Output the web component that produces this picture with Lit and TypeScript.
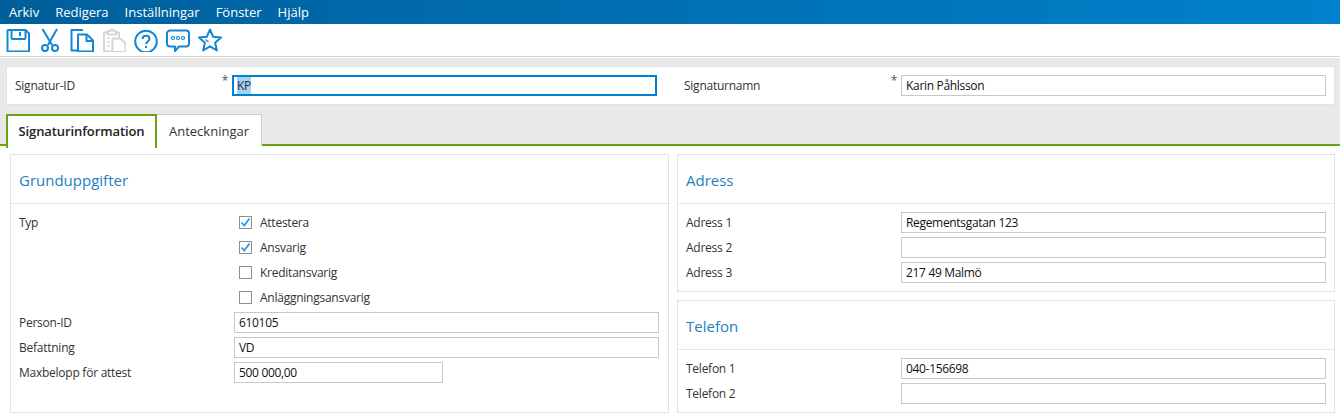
import { LitElement, html, css, svg } from "lit";
import { customElement } from "lit/decorators.js";

const ICONS = {
  save: svg`<path d="M1.500 3a1 1 0 0 1 1-1H19.500L23 5.500V22.500a1 1 0 0 1-1 1H2.500a1 1 0 0 1-1-1z"/><path d="M5.500 2v8a1 1 0 0 0 1 1h12a1 1 0 0 0 1-1V2"/><path d="M14 4v4" stroke-width="2"/>`,
  cut: svg`<path d="M4.500 1l9.500 16"/><path d="M19 1L10 17"/><circle cx="7" cy="20" r="3"/><circle cx="17" cy="20" r="3"/>`,
  copy: svg`<path d="M13 2H1.500v20.500H7"/><path d="M8 6.500h9l6 6v11H8z"/><path d="M16.500 6.500v6.500h6.500"/>`,
  paste: svg`<path d="M6.500 4.500H2v19h8"/><path d="M13 4.500h4v5"/><path d="M6 3h2.500a1.500 1.500 0 0 1 3 0H14v3.500H6z"/><path d="M10.500 10.500h8l5 5v8.500H10.500z"/><path d="M5 10h3M5 14h3M5 18h3" stroke-width="1.500"/>`,
  help: svg`<circle cx="12" cy="13.500" r="10.800"/><path d="M8.600 11c0-2 1.500-3.200 3.500-3.200s3.400 1.200 3.400 3c0 2.600-3.400 2.900-3.400 5.400"/><path d="M12.100 17.800v2.200"/>`,
  chat: svg`<path d="M4 2.500h16a3 3 0 0 1 3 3v10a3 3 0 0 1-3 3h-7L9 23v-4.500H4a3 3 0 0 1-3-3v-10a3 3 0 0 1 3-3z"/><circle cx="7" cy="10" r="1.500" stroke-width="1.200"/><circle cx="12" cy="10" r="1.500" stroke-width="1.200"/><circle cx="17" cy="10" r="1.500" stroke-width="1.200"/>`,
  star: svg`<path d="M12 1.500l3.200 7.300 7.800.700-5.900 5.200 1.800 7.800L12 18.400l-6.900 4.100 1.800-7.800L1 9.500l7.800-.700z"/><path d="M7.500 11.500l3 2.500" stroke-width="1.200"/>`,
};

@customElement("app-root")
export class AppRoot extends LitElement {
  static styles = css`
    :host {
      display: block;
      width: 1340px;
      height: 416px;
      overflow: hidden;
      background: #fff;
      font-family: "Open Sans", "Noto Sans", sans-serif;
      font-size: 12px;
      letter-spacing: -0.25px;
      color: #333;
    }
    .menubar {
      height: 24px;
      display: flex;
      align-items: center;
      gap: 16px;
      padding-left: 9px;
      background: linear-gradient(90deg, #005f9b, #0081cb);
      color: #fff;
      font-size: 13px;
      letter-spacing: 0;
    }
    .toolbar {
      height: 32px;
      display: flex;
      align-items: center;
      gap: 8px;
      padding-left: 6px;
      box-sizing: border-box;
      background: #fff;
    }
    .icon {
      width: 24px;
      height: 24px;
      fill: none;
      stroke: #1287d3;
      stroke-width: 2;
      stroke-linejoin: round;
      display: block;
    }
    .icon.off {
      stroke: #d6d6d6;
    }
    .rule {
      height: 1px;
      background: #d4d4d4;
      border-bottom: 1px solid #fff;
    }
    .top {
      background: #e9e9e9;
      padding: 8px 5px 0 6px;
      height: 88px;
      box-sizing: border-box;
    }
    .head {
      height: 39px;
      box-sizing: border-box;
      background: #fff;
      border: 1px solid #dfe3e8;
      display: grid;
      grid-template-columns: 225px 425px 27px 217px 425px;
      align-items: center;
    }
    .head .label {
      padding-left: 8px;
    }
    .req {
      position: relative;
      display: block;
    }
    .star {
      position: absolute;
      top: -2px;
      right: 4px;
      color: #555;
      font-size: 12px;
      line-height: 12px;
    }
    input {
      box-sizing: border-box;
      display: block;
      width: 425px;
      height: 21px;
      border: 1px solid #c8c8c8;
      padding: 0 4px;
      font: inherit;
      letter-spacing: -0.32px;
      color: #111;
      background: #fff;
      outline: none;
    }
    input.focus {
      border: 2px solid #0082d2;
      padding: 0 3px;
      color: #17324f;
    }
    input.focus::selection {
      background: #a8d1f0;
    }
    input.short {
      width: 209px;
    }
    .tabs {
      display: flex;
      align-items: flex-end;
      margin-top: 9px;
      height: 32px;
    }
    .tab {
      box-sizing: border-box;
      display: flex;
      align-items: center;
      justify-content: center;
      height: 32px;
      width: 105px;
      background: #fff;
      border: 1px solid #cfcfcf;
      border-bottom: none;
      border-left: none;
      color: #333;
      font-size: 13px;
      letter-spacing: 0;
    }
    .tab.active {
      width: 151px;
      height: 34px;
      border: 2px solid #6ca312;
      border-bottom: none;
      padding-bottom: 2px;
      margin-bottom: -2px;
      position: relative;
      z-index: 1;
      font-weight: 600;
      letter-spacing: -0.1px;
      color: #222;
    }
    .content {
      border-top: 2px solid #6ca312;
      background: #fff;
      margin-top: -2px;
      padding: 8px 5px 0 10px;
      display: grid;
      grid-template-columns: 659px 658px;
      gap: 8px;
      height: 272px;
      box-sizing: border-box;
    }
    .col {
      display: flex;
      flex-direction: column;
      gap: 8px;
    }
    .panel {
      border: 1px solid #dfe3e8;
      box-sizing: border-box;
      background: #fff;
    }
    .left {
      height: 259px;
    }
    h2 {
      margin: 0;
      box-sizing: border-box;
      padding: 15px 8px 0;
      line-height: 20px;
      font-size: 15px;
      font-weight: 400;
      letter-spacing: 0;
      color: #1f7fc0;
      border-bottom: 1px solid #e4e7ea;
      height: 49px;
    }
    .body {
      padding: 8px 9px 8px 8px;
      display: grid;
      grid-template-columns: 215px 1fr;
      row-gap: 4px;
      align-items: center;
    }
    .row-label,
    .check {
      height: 21px;
      display: flex;
      align-items: center;
    }
    .check {
      gap: 8px;
      padding-left: 5px;
    }
    .box {
      width: 13px;
      height: 13px;
      box-sizing: border-box;
      border: 1px solid #8f8f8f;
      background: #fff;
      display: block;
    }
    .box path {
      fill: none;
      stroke: #2a9be4;
      stroke-width: 1.800;
    }
    .checkrow {
      grid-column: 2;
    }
  `;

  private icon(name: keyof typeof ICONS, off = false) {
    return html`<svg class="icon ${off ? "off" : ""}" viewBox="0 0 24 24">${ICONS[name]}</svg>`;
  }

  private check(label: string, on: boolean) {
    return html`<div class="check">
      <svg class="box" viewBox="0 0 11 11">${on ? svg`<path d="M1.500 5.500l2.800 3 5.200-7"/>` : ""}</svg>
      <span>${label}</span>
    </div>`;
  }

  private field(label: string, value: string, short = false) {
    return html`<div class="row-label">${label}</div>
      <input class="${short ? "short" : ""}" .value=${value} />`;
  }

  firstUpdated() {
    const el = this.renderRoot.querySelector("input.focus") as HTMLInputElement;
    el.focus();
    el.select();
  }

  render() {
    return html`
      <div class="menubar">
        <span>Arkiv</span><span>Redigera</span><span>Inställningar</span><span>Fönster</span><span>Hjälp</span>
      </div>
      <div class="toolbar">
        ${this.icon("save")}${this.icon("cut")}${this.icon("copy")}${this.icon("paste", true)}${this.icon("help")}${this.icon("chat")}${this.icon("star")}
      </div>
      <div class="rule"></div>
      <div class="top">
        <div class="head">
          <div class="label req">Signatur-ID<span class="star">*</span></div>
          <input class="focus" .value=${"KP"} />
          <div></div>
          <div class="req">Signaturnamn<span class="star">*</span></div>
          <input .value=${"Karin Påhlsson"} />
        </div>
        <div class="tabs">
          <div class="tab active">Signaturinformation</div>
          <div class="tab">Anteckningar</div>
        </div>
      </div>
      <div class="content">
        <section class="panel left">
          <h2>Grunduppgifter</h2>
          <div class="body">
            <div class="row-label">Typ</div>
            ${this.check("Attestera", true)}
            <div class="checkrow">${this.check("Ansvarig", true)}</div>
            <div class="checkrow">${this.check("Kreditansvarig", false)}</div>
            <div class="checkrow">${this.check("Anläggningsansvarig", false)}</div>
            ${this.field("Person-ID", "610105")}
            ${this.field("Befattning", "VD")}
            ${this.field("Maxbelopp för attest", "500 000,00", true)}
          </div>
        </section>
        <div class="col">
          <section class="panel">
            <h2>Adress</h2>
            <div class="body">
              ${this.field("Adress 1", "Regementsgatan 123")}
              ${this.field("Adress 2", "")}
              ${this.field("Adress 3", "217 49 Malmö")}
            </div>
          </section>
          <section class="panel">
            <h2>Telefon</h2>
            <div class="body">
              ${this.field("Telefon 1", "040-156698")}
              ${this.field("Telefon 2", "")}
            </div>
          </section>
        </div>
      </div>
    `;
  }
}
